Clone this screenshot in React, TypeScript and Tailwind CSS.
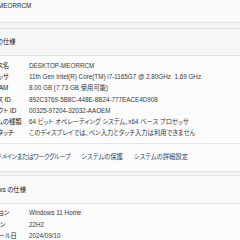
import React from "react";

const deviceRows: [string, string][] = [
  ["デバイス名", "DESKTOP-MEORRCM"],
  ["プロセッサ", "11th Gen Intel(R) Core(TM) i7-1165G7 @ 2.80GHz\u00a0\u00a01.69 GHz"],
  ["実装 RAM", "8.00 GB (7.73 GB 使用可能)"],
  ["デバイス ID", "892C3769-5B8C-448E-8B24-777EACE4D908"],
  ["プロダクト ID", "00325-97204-32032-AAOEM"],
  ["システムの種類", "64 ビット オペレーティング システム、x64 ベース プロセッサ"],
  ["ペンとタッチ", "このディスプレイでは、ペン入力とタッチ入力は利用できません"],
];

const winRows: [string, string][] = [
  ["エディション", "Windows 11 Home"],
  ["バージョン", "22H2"],
  ["インストール日", "2024/09/10"],
];

function DeviceRow({ label, value }: { label: string; value: string }) {
  return (
    <div className="flex leading-[11.2px] whitespace-nowrap">
      <div className="w-[49px] ml-[-20px] shrink-0 text-[#1b1b1b]">{label}</div>
      <div className="text-[#3a3a3a]">{value}</div>
    </div>
  );
}

function WinRow({ label, value }: { label: string; value: string }) {
  return (
    <div className="flex leading-[11.2px] whitespace-nowrap">
      <div className="w-[52px] ml-[-23px] shrink-0 text-[#1b1b1b]">{label}</div>
      <div className="text-[#3a3a3a]">{value}</div>
    </div>
  );
}

export default function App() {
  return (
    <div className="w-[240px] h-[240px] overflow-hidden bg-[#f3f3f5] text-[6.3px] text-[#1b1b1b] [font-family:'Segoe_UI','Liberation_Sans','Noto_Sans_CJK_JP',sans-serif] [font-feature-settings:'palt'] flex flex-col">
      <div className="h-[23px] shrink-0 bg-[#fafafc] border-b border-[#e3e3e6] overflow-hidden">
        <div className="ml-[-34px] leading-[11px] whitespace-nowrap text-[#2b2b2b]">DESKTOP-MEORRCM</div>
      </div>
      <div className="h-[5px] shrink-0" />
      <div className="h-[28px] shrink-0 bg-[#f5f6f8] border-y border-[#e3e3e6] flex items-center whitespace-nowrap">
        <span className="ml-[-26px]">デバイスの仕様</span>
      </div>
      <div className="shrink-0 bg-[#fbfbfc] pt-[4px] pb-[5px] border-b border-[#e5e5e8]">
        {deviceRows.map(([l, v]) => (
          <DeviceRow key={l} label={l} value={v} />
        ))}
      </div>
      <div className="h-[28px] shrink-0 bg-[#fbfbfc] border-b border-[#e3e3e6] flex items-center gap-[11px] whitespace-nowrap text-[#1f4a6e] pb-[2px]">
        <span className="ml-[-3px] tracking-[-0.5px]">ドメインまたはワークグループ</span>
        <span>システムの保護</span>
        <span>システムの詳細設定</span>
      </div>
      <div className="h-[3px] shrink-0" />
      <div className="h-[29px] shrink-0 bg-[#fafafc] border-y border-[#e3e3e6] flex items-center whitespace-nowrap">
        <span className="ml-[-20px]">Windows の仕様</span>
      </div>
      <div className="flex-1 bg-[#fbfbfc] pt-[3px]">
        {winRows.map(([l, v]) => (
          <WinRow key={l} label={l} value={v} />
        ))}
      </div>
    </div>
  );
}
